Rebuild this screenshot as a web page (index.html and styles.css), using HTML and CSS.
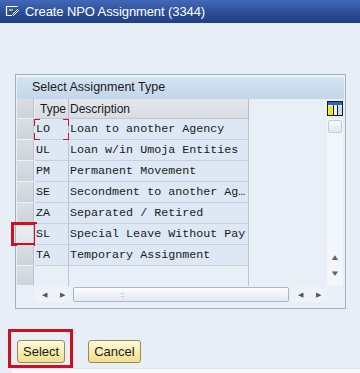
FILE: index.html
```html
<!DOCTYPE html>
<html>
<head>
<meta charset="utf-8">
<link rel="stylesheet" href="styles.css">
</head>
<body>
<div class="titlebar">
  <svg class="ticon" width="14" height="12" viewBox="0 0 14 12">
    <path d="M1.5 1.5 H12.5 M1.5 1.5 V10.5 H7 M4 5 H8" fill="none" stroke="#fff" stroke-width="1.2"/>
    <path d="M7.5 9.5 L12.5 4.5 L13.5 5.5 L8.5 10.5 Z" fill="none" stroke="#fff" stroke-width="1"/>
  </svg>
  <span class="title">Create NPO Assignment (3344)</span>
</div>
<div class="content">
  <div class="panel">
    <div class="panel-head">Select Assignment Type</div>
    <div class="panel-body">
      <div class="table">
        <div class="row head">
          <div class="sel"></div>
          <div class="c-type">Type</div>
          <div class="c-desc">Description</div>
        </div>
        <div class="row">
          <div class="sel"></div>
          <div class="c-type">LO<span class="mark"></span></div>
          <div class="c-desc">Loan to another Agency</div>
        </div>
        <div class="row">
          <div class="sel"></div>
          <div class="c-type">UL</div>
          <div class="c-desc">Loan w/in Umoja Entities</div>
        </div>
        <div class="row">
          <div class="sel"></div>
          <div class="c-type">PM</div>
          <div class="c-desc">Permanent Movement</div>
        </div>
        <div class="row">
          <div class="sel"></div>
          <div class="c-type">SE</div>
          <div class="c-desc">Secondment to another Ag…</div>
        </div>
        <div class="row">
          <div class="sel"></div>
          <div class="c-type">ZA</div>
          <div class="c-desc">Separated / Retired</div>
        </div>
        <div class="row">
          <div class="sel hl"><span class="redbox small"></span></div>
          <div class="c-type">SL</div>
          <div class="c-desc">Special Leave Without Pay</div>
        </div>
        <div class="row">
          <div class="sel"></div>
          <div class="c-type">TA</div>
          <div class="c-desc">Temporary Assignment</div>
        </div>
        <div class="row empty">
          <div class="sel"></div>
          <div class="c-type"></div>
          <div class="c-desc"></div>
        </div>
      </div>
      <div class="vcol">
        <svg class="settings" width="16" height="15" viewBox="0 0 16 15">
          <rect x="0.5" y="0.5" width="15" height="14" fill="#e9f1f9" stroke="#1a1a1a"/>
          <rect x="1" y="1" width="14" height="3" fill="#2f63b8"/>
          <rect x="1.5" y="5" width="4" height="9" fill="#f2e400"/>
          <rect x="6" y="4" width="1" height="10" fill="#1a1a1a"/>
          <rect x="10" y="4" width="1" height="10" fill="#1a1a1a"/>
          <rect x="11" y="5" width="4" height="9" fill="#c6dbf0"/>
        </svg>
        <div class="vscroll">
          <div class="vthumb"></div>
          <div class="vspace"></div>
          <div class="varrow">&#9650;</div>
          <div class="varrow">&#9660;</div>
        </div>
      </div>
    </div>
    <div class="hscroll">
      <div class="harrows"><span>&#9664;</span><span>&#9654;</span></div>
      <div class="hslider"><span class="grip">:::</span></div>
      <div class="harrows"><span>&#9664;</span><span>&#9654;</span></div>
    </div>
  </div>
  <div class="buttons">
    <div class="btnwrap">
      <button class="btn">Select</button>
      <span class="redbox big"></span>
    </div>
    <button class="btn">Cancel</button>
  </div>
</div>
<div class="bottomstrip"></div>
</body>
</html>
```

FILE: styles.css
```css
html, body {
  margin: 0;
  padding: 0;
}
body {
  width: 360px;
  height: 373px;
  overflow: hidden;
  background: #e8eef5;
  font-family: "Liberation Sans", Arial, sans-serif;
  position: relative;
}
.titlebar {
  height: 23px;
  box-sizing: border-box;
  background: linear-gradient(#4169b9, #2a4c96 60%, #213f83);
  display: flex;
  align-items: center;
  padding-left: 5px;
  gap: 6px;
}
.ticon {
  display: block;
  margin-top: -1px;
}
.title {
  color: #ffffff;
  font-size: 13px;
  letter-spacing: -0.1px;
}
.content {
  padding: 51px 0 0 15px;
}
.panel {
  width: 331px;
  box-sizing: border-box;
  border: 1px solid #a3b2c2;
  padding: 1px 1px 6px 1px;
  background: #e9eff6;
}
.panel-head {
  height: 23px;
  box-sizing: border-box;
  border-top: 1px solid #f4f8fc;
  background: linear-gradient(#d5e3f1, #c3d6ea);
  font-size: 12.5px;
  color: #1b1b1b;
  padding-left: 15px;
  line-height: 21px;
}
.panel-body {
  display: flex;
}
.table {
  flex: 1;
  display: flex;
  flex-direction: column;
}
.row {
  display: flex;
  height: 21px;
}
.row.head {
  height: 20px;
}
.row.empty {
  height: 20px;
}
.sel {
  width: 17px;
  box-sizing: border-box;
  margin-right: 1px;
  background: linear-gradient(#dadfe4, #cdd3da);
  border-bottom: 1px solid #eef2f6;
  border-right: 1px solid #b9c2cc;
  position: relative;
}
.sel.hl {
  background: linear-gradient(#eceef1, #e1e5ea);
}
.row.head .sel {
  background: linear-gradient(#d9dde2, #cfd4da);
}
.c-type, .c-desc {
  box-sizing: border-box;
  border-right: 1px solid #b8c5d3;
  border-bottom: 1px solid #c3d0dd;
  background: #dde8f4;
  font-family: "Liberation Mono", "Courier New", monospace;
  font-size: 11.7px;
  line-height: 21px;
  color: #1a1a1a;
  white-space: nowrap;
  overflow: hidden;
}
.c-type {
  width: 34px;
  padding-left: 1px;
  position: relative;
  overflow: visible;
}
.c-desc {
  width: 180px;
  padding-left: 1px;
}
.row.head .c-type, .row.head .c-desc {
  font-family: "Liberation Sans", Arial, sans-serif;
  font-size: 12px;
  line-height: 20px;
  background: linear-gradient(#e3e7eb, #d8dde3);
  border-bottom: 1px solid #c0c9d3;
  border-right: 1px solid #b5bfca;
}
.row.head .c-type {
  padding-left: 5px;
}
.row.empty .c-type, .row.empty .c-desc {
  background: #e9eff6;
  border-bottom: none;
}
.mark {
  position: absolute;
  left: -1px;
  top: 0;
  width: 35px;
  height: 21px;
  box-sizing: border-box;
  background:
    linear-gradient(#c41a2a, #c41a2a) left top / 6px 1px no-repeat,
    linear-gradient(#c41a2a, #c41a2a) left top / 1px 7px no-repeat,
    linear-gradient(#c41a2a, #c41a2a) right top / 6px 1px no-repeat,
    linear-gradient(#c41a2a, #c41a2a) right top / 1px 7px no-repeat,
    linear-gradient(#c41a2a, #c41a2a) left bottom / 6px 1px no-repeat,
    linear-gradient(#c41a2a, #c41a2a) left bottom / 1px 7px no-repeat,
    linear-gradient(#c41a2a, #c41a2a) right bottom / 6px 1px no-repeat,
    linear-gradient(#c41a2a, #c41a2a) right bottom / 1px 7px no-repeat;
}
.vcol {
  width: 16px;
  margin-right: 1px;
  display: flex;
  flex-direction: column;
  align-items: center;
}
.settings {
  display: block;
  margin-top: 2px;
  margin-bottom: 3px;
}
.vscroll {
  width: 16px;
  height: 167px;
  box-sizing: border-box;
  padding-bottom: 4px;
  background: #f3f6fa;
  display: flex;
  flex-direction: column;
  align-items: center;
}
.vthumb {
  width: 14px;
  height: 13px;
  box-sizing: border-box;
  border: 1px solid #c2ccd6;
  border-radius: 2px;
  background: linear-gradient(#f8fafc, #e2e8ee);
  margin-top: 1px;
}
.vspace {
  flex: 1;
}
.varrow {
  font-size: 8px;
  color: #5c6670;
  height: 16px;
  line-height: 16px;
  transform: scaleX(1.3);
}
.hscroll {
  display: flex;
  align-items: center;
  height: 15px;
  margin-top: 1px;
  margin-left: 18px;
  gap: 2px;
}
.harrows {
  width: 36px;
  display: flex;
  justify-content: space-around;
  font-size: 7px;
  color: #4f5860;
  background: #eef3f8;
  height: 15px;
  line-height: 15px;
}
.hslider {
  width: 216px;
  height: 15px;
  box-sizing: border-box;
  border: 1px solid #aab6c2;
  border-radius: 2px;
  background: linear-gradient(#fbfcfd, #e3e9ef);
  position: relative;
}
.grip {
  position: absolute;
  left: 46px;
  top: 0;
  font-size: 8px;
  line-height: 13px;
  color: #a8b2bc;
  letter-spacing: -1px;
}
.buttons {
  display: flex;
  align-items: center;
  gap: 23px;
  margin-top: 31px;
  margin-left: 2px;
}
.btnwrap {
  position: relative;
}
.btn {
  display: block;
  height: 23px;
  padding: 0 5px;
  box-sizing: border-box;
  border: 1px solid #9c8a55;
  border-radius: 3px;
  background: linear-gradient(#fffbe0, #f6ebaa 55%, #efdf8e);
  font-family: "Liberation Sans", Arial, sans-serif;
  font-size: 13px;
  color: #1c1c1c;
  line-height: 21px;
}
.redbox {
  position: absolute;
  border: 3px solid #d10f1f;
  box-sizing: border-box;
  pointer-events: none;
}
.redbox.big {
  left: -9px;
  top: -11px;
  width: 65px;
  height: 39px;
}
.redbox.small {
  left: -6px;
  top: -2px;
  width: 26px;
  height: 24px;
}
.bottomstrip {
  position: absolute;
  left: 12px;
  right: 0;
  bottom: 0;
  height: 4px;
  background: #f7f9fb;
  border-top: 1px solid #e1e6ec;
}
```
